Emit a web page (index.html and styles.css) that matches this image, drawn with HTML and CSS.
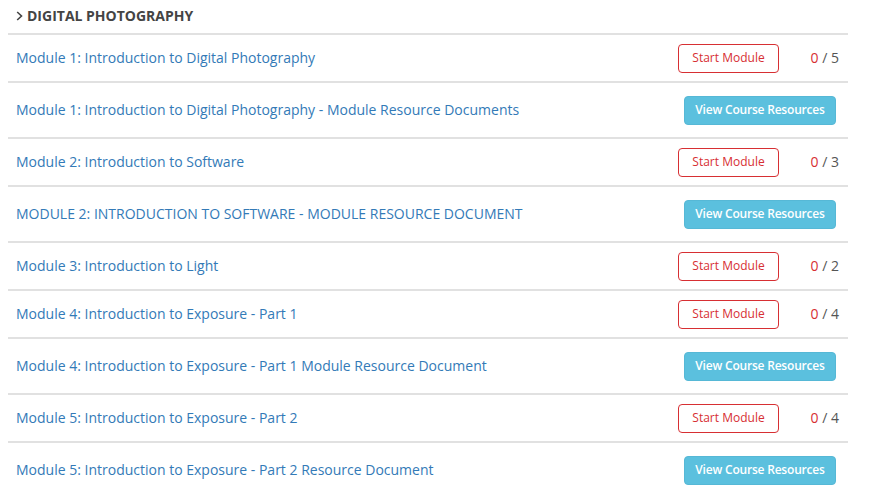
FILE: index.html
```html
<!DOCTYPE html>
<html>
<head>
<meta charset="utf-8">
<link rel="stylesheet" href="styles.css">
</head>
<body>
<div class="course">
  <div class="course-header">
    <svg class="chev" width="7" height="10" viewBox="0 0 7 10"><path d="M1.2 1 L5.5 5 L1.2 9" fill="none" stroke="#444" stroke-width="1.6"/></svg>
    <span>DIGITAL PHOTOGRAPHY</span>
  </div>
  <div class="row row-start">
    <a class="title">Module 1: Introduction to Digital Photography</a>
    <span class="btn btn-start">Start Module</span>
    <span class="count"><span class="done">0</span> / 5</span>
  </div>
  <div class="row row-res">
    <a class="title">Module 1: Introduction to Digital Photography - Module Resource Documents</a>
    <span class="btn btn-res">View Course Resources</span>
  </div>
  <div class="row row-start">
    <a class="title">Module 2: Introduction to Software</a>
    <span class="btn btn-start">Start Module</span>
    <span class="count"><span class="done">0</span> / 3</span>
  </div>
  <div class="row row-res">
    <a class="title">MODULE 2: INTRODUCTION TO SOFTWARE - MODULE RESOURCE DOCUMENT</a>
    <span class="btn btn-res">View Course Resources</span>
  </div>
  <div class="row row-start">
    <a class="title">Module 3: Introduction to Light</a>
    <span class="btn btn-start">Start Module</span>
    <span class="count"><span class="done">0</span> / 2</span>
  </div>
  <div class="row row-start">
    <a class="title">Module 4: Introduction to Exposure - Part 1</a>
    <span class="btn btn-start">Start Module</span>
    <span class="count"><span class="done">0</span> / 4</span>
  </div>
  <div class="row row-res">
    <a class="title">Module 4: Introduction to Exposure - Part 1 Module Resource Document</a>
    <span class="btn btn-res">View Course Resources</span>
  </div>
  <div class="row row-start">
    <a class="title">Module 5: Introduction to Exposure - Part 2</a>
    <span class="btn btn-start">Start Module</span>
    <span class="count"><span class="done">0</span> / 4</span>
  </div>
  <div class="row row-res last">
    <a class="title">Module 5: Introduction to Exposure - Part 2 Resource Document</a>
    <span class="btn btn-res">View Course Resources</span>
  </div>
</div>
</body>
</html>
```
FILE: styles.css
```css
html, body {
  margin: 0;
  padding: 0;
  background: #fff;
}
body {
  font-family: "Open Sans", "Noto Sans", sans-serif;
  font-size: 14px;
  overflow: hidden;
}
.course {
  margin-left: 8px;
  width: 840px;
}
.course-header {
  height: 31px;
  padding: 0 0 2px 8px;
  border-bottom: 2px solid #e1e1e1;
  display: flex;
  align-items: center;
  font-weight: 700;
  color: #444;
  font-size: 14px;
}
.course-header span {
  margin-left: 4px;
}
.row {
  display: flex;
  align-items: center;
  padding: 0 9px 0 8px;
  border-bottom: 2px solid #e1e1e1;
}
.row.last {
  border-bottom: none;
}
.row-start { height: 46px; }
.row-res { height: 54px; }
.title {
  flex: 1;
  color: #337ab7;
  text-decoration: none;
  padding-bottom: 2px;
}
.btn {
  font-size: 12px;
  border-radius: 4px;
  box-sizing: border-box;
  height: 29px;
  display: inline-flex;
  align-items: center;
  justify-content: center;
  padding-bottom: 1px;
}
.btn-start {
  width: 101px;
  border: 1px solid #d72f33;
  color: #d72f33;
  background: #fff;
}
.btn-res {
  width: 152px;
  background: #5bc0de;
  color: #fff;
  font-weight: 600;
  letter-spacing: -0.2px;
  margin-right: 3px;
  border: 1px solid #56b8d6;
}
.count {
  width: 60px;
  text-align: right;
  color: #555;
  padding-bottom: 2px;
}
.done {
  color: #d72f33;
}
```
